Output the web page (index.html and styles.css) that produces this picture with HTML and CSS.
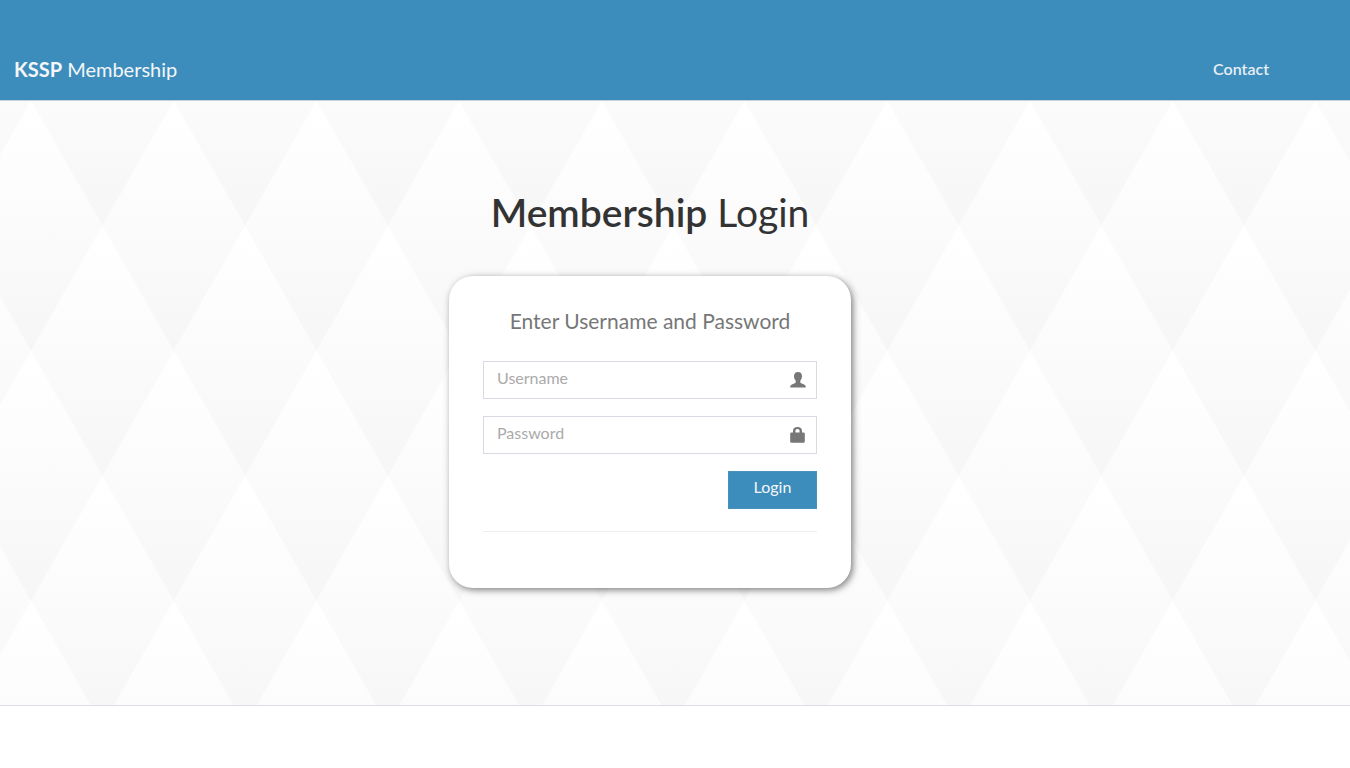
FILE: index.html
```html
<!DOCTYPE html>
<html lang="en">
<head>
    <meta charset="UTF-8">
    <meta name="viewport" content="width=device-width, initial-scale=1.0">
    <title>KSSP Membership</title>
    <link rel="stylesheet" href="styles.css">
</head>
<body>

<header class="main-header">
    <a class="brand" href="#"><b>KSSP</b> Membership</a>
    <nav>
        <a class="nav-link" href="#">Contact</a>
    </nav>
</header>

<main class="login-page">
    <svg class="backdrop" aria-hidden="true">
        <defs>
            <linearGradient id="shade" x1="0" y1="0" x2="0" y2="1">
                <stop offset="0" stop-color="#ffffff"/>
                <stop offset="0.3" stop-color="#fdfdfd"/>
                <stop offset="1" stop-color="#f6f6f6"/>
            </linearGradient>
            <pattern id="diamonds" x="-40.3" y="0" width="142.7" height="250" patternUnits="userSpaceOnUse">
                <path fill="url(#shade)" d="M0 -125L71.35 0L0 125L-71.35 0z"/>
                <path fill="url(#shade)" d="M142.7 -125L214.05 0L142.7 125L71.35 0z"/>
                <path fill="url(#shade)" d="M71.35 0L142.7 125L71.35 250L0 125z"/>
                <path fill="url(#shade)" d="M0 125L71.35 250L0 375L-71.35 250z"/>
                <path fill="url(#shade)" d="M142.7 125L214.05 250L142.7 375L71.35 250z"/>
            </pattern>
        </defs>
        <rect width="100%" height="100%" fill="url(#diamonds)"/>
    </svg>

    <div class="login-box">
        <h1 class="login-logo"><b>Membership</b> Login</h1>
        <div class="login-box-body">
            <p class="login-box-msg">Enter Username and Password</p>
            <form>
                <div class="form-group">
                    <input type="text" class="form-control" placeholder="Username" aria-label="Username">
                    <svg class="feedback" viewBox="0 0 16 16" aria-hidden="true">
                        <path d="M8 0C5.500 0 4 1.600 4 4.200C4 6 4.700 7.600 5.700 8.600V10.400C5.400 11.200 3.300 11.800 1.900 12.500C0.700 13 0.300 13.800 0.200 15.500H15.800C15.700 13.800 15.300 13 14.100 12.500C12.700 11.800 10.600 11.200 10.300 10.400V8.600C11.300 7.600 12 6 12 4.200C12 1.600 10.500 0 8 0z"/>
                    </svg>
                </div>
                <div class="form-group">
                    <input type="password" class="form-control" placeholder="Password" aria-label="Password">
                    <svg class="feedback" viewBox="0 0 16 16" aria-hidden="true">
                        <path fill-rule="evenodd" d="M3 5.500V4C3 1.500 4.600 0 7.500 0C10.400 0 12 1.500 12 4V5.500H13.500Q14.800 5.500 14.800 6.800V14.400Q14.800 15.700 13.500 15.700H1.500Q0.200 15.700 0.200 14.400V6.800Q0.200 5.500 1.500 5.500zM5.400 5.500H9.600V4C9.600 2.700 8.800 1.900 7.500 1.900C6.200 1.900 5.400 2.700 5.400 4z"/>
                    </svg>
                </div>
                <div class="form-actions">
                    <button type="submit" class="btn-login">Login</button>
                </div>
            </form>
            <hr class="divider">
        </div>
    </div>
</main>

<footer class="main-footer"></footer>

</body>
</html>
```

FILE: styles.css
```css
* {
    box-sizing: border-box;
}

body {
    margin: 0;
    min-height: 100vh;
    display: flex;
    flex-direction: column;
    font-family: Lato, sans-serif;
    font-size: 16px;
    line-height: 20px;
    color: #333;
    background-color: #fff;
}

.main-header {
    display: flex;
    justify-content: space-between;
    align-items: center;
    padding: 38px 81px 0 14px;
    height: 101px;
    background-color: #3c8dbc;
    border-bottom: 1px solid #c3d3e0;
}

.brand {
    font-size: 20px;
    color: #f4f6f9;
    text-decoration: none;
}

.nav-link {
    font-weight: 600;
    color: #e8eef4;
    text-decoration: none;
}

/* the wider right padding keeps the column left of centre */
.login-page {
    position: relative;
    flex: 1;
    padding: 87px 66px 116px 16px;
}

.backdrop {
    position: absolute;
    top: 0;
    left: 0;
    width: 100%;
    height: 100%;
}

.login-box {
    position: relative;
    max-width: 402px;
    margin: 0 auto;
}

.login-logo {
    margin: 0 0 40px;
    font-size: 39px;
    line-height: 48px;
    font-weight: 400;
    text-align: center;
}

.login-logo b {
    font-weight: 600;
}

.login-box-body {
    padding: 34px 34px 56px;
    border-radius: 24px;
    background-color: #fff;
    box-shadow: 2px 2px 7px rgba(0, 0, 0, 0.5);
}

.login-box-msg {
    margin: 0 0 29px;
    font-size: 21px;
    line-height: 22px;
    color: #777;
    text-align: center;
}

.form-group {
    position: relative;
    margin-bottom: 17px;
}

.form-control {
    display: block;
    width: 100%;
    height: 38px;
    padding: 2px 40px 8px 13px;
    border: 1px solid #d8dbe3;
    border-radius: 0;
    background-color: #fff;
    font: inherit;
    color: #555;
}

.form-control::placeholder {
    color: #aaa;
}

.feedback {
    position: absolute;
    top: 11px;
    right: 11px;
    width: 16px;
    height: 16px;
    fill: #777;
}

.form-actions {
    display: flex;
    justify-content: flex-end;
}

.btn-login {
    width: 89px;
    height: 38px;
    padding: 2px 12px 8px;
    border: 1px solid #4a90bd;
    background-color: #3c8dbc;
    font: inherit;
    color: #f4f6f9;
    cursor: pointer;
}

.divider {
    margin: 22px 0 0;
    border: 0;
    border-top: 1px solid #eee;
}

.main-footer {
    height: 63px;
    border-top: 1px solid #dcdfe6;
    background-color: #fff;
}
```
